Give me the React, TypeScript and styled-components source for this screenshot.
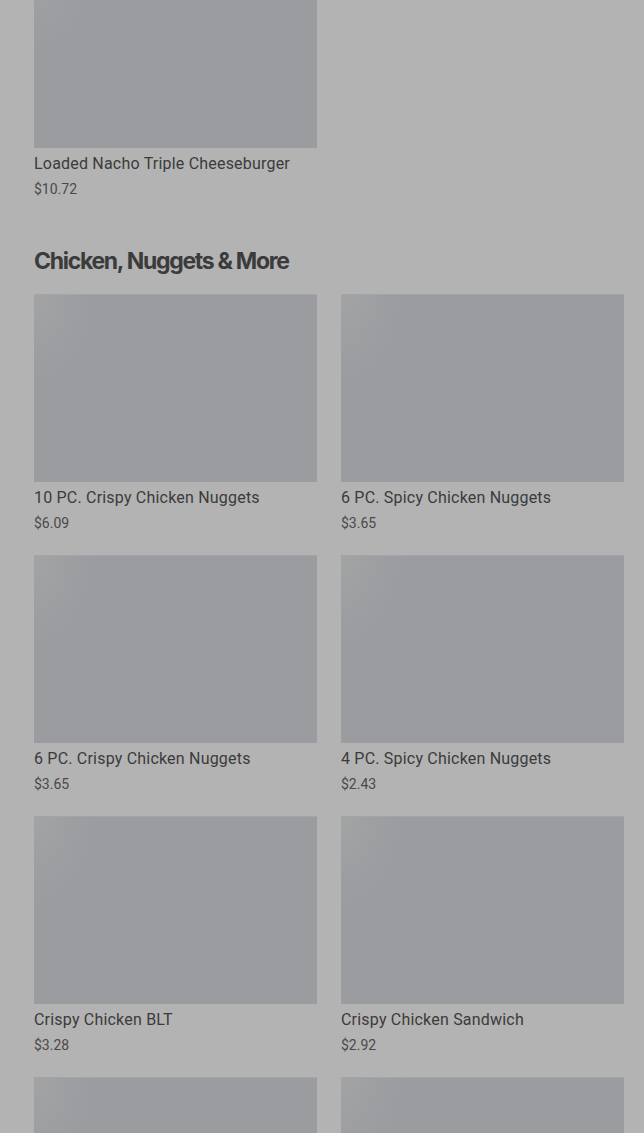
import styled, { createGlobalStyle } from "styled-components";

const GlobalStyle = createGlobalStyle`
  html, body {
    margin: 0;
    padding: 0;
    background: #b3b3b3;
  }
  body {
    font-family: "Inter", "Liberation Sans", sans-serif;
    overflow: hidden;
  }
`;

const Page = styled.main`
  margin-top: -40px;
  padding: 0 20px 0 34px;
  display: flex;
  flex-direction: column;
  gap: 46px;
`;

const Section = styled.section`
  display: flex;
  flex-direction: column;
`;

const Heading = styled.h2`
  margin: 0 0 17px;
  font-family: "Inter", "Liberation Sans", sans-serif;
  font-size: 23px;
  line-height: 32px;
  font-weight: 700;
  letter-spacing: -1.3px;
  color: #3b3b3b;
`;

const Grid = styled.div`
  display: grid;
  grid-template-columns: repeat(2, 283px);
  column-gap: 24px;
  row-gap: 22px;
`;

const Card = styled.div`
  display: flex;
  flex-direction: column;
`;

const Thumb = styled.div`
  height: 188px;
  background:
    linear-gradient(180deg, #a3a4a7 0, #a3a4a7 1px, transparent 1px),
    radial-gradient(ellipse 64px 96px at 0 0, rgba(168, 168, 166, 0.6) 0, rgba(164, 164, 164, 0.3) 60%, transparent 100%),
    #9a9ca0;
`;

const Name = styled.div`
  margin-top: 4px;
  font-family: "Roboto", "Liberation Sans", sans-serif;
  font-size: 16px;
  line-height: 24px;
  font-weight: 400;
  letter-spacing: 0.2px;
  color: #3b3b3b;
`;

const Price = styled.div`
  margin-top: 3px;
  font-family: "Roboto", "Liberation Sans", sans-serif;
  font-size: 14px;
  line-height: 20px;
  color: #4a4a4a;
`;

type Item = { name: string; price: string };

const burgers: Item[] = [{ name: "Loaded Nacho Triple Cheeseburger", price: "$10.72" }];

const chicken: Item[] = [
  { name: "10 PC. Crispy Chicken Nuggets", price: "$6.09" },
  { name: "6 PC. Spicy Chicken Nuggets", price: "$3.65" },
  { name: "6 PC. Crispy Chicken Nuggets", price: "$3.65" },
  { name: "4 PC. Spicy Chicken Nuggets", price: "$2.43" },
  { name: "Crispy Chicken BLT", price: "$3.28" },
  { name: "Crispy Chicken Sandwich", price: "$2.92" },
  { name: "Spicy Chicken Sandwich", price: "$3.40" },
  { name: "Classic Chicken Sandwich", price: "$3.16" },
];

function MenuCard({ name, price }: Item) {
  return (
    <Card>
      <Thumb />
      <Name>{name}</Name>
      <Price>{price}</Price>
    </Card>
  );
}

export default function App() {
  return (
    <>
      <GlobalStyle />
      <Page>
        <Section>
          <Grid>
            {burgers.map((item) => (
              <MenuCard key={item.name} {...item} />
            ))}
          </Grid>
        </Section>
        <Section>
          <Heading>Chicken, Nuggets &amp; More</Heading>
          <Grid>
            {chicken.map((item) => (
              <MenuCard key={item.name} {...item} />
            ))}
          </Grid>
        </Section>
      </Page>
    </>
  );
}
